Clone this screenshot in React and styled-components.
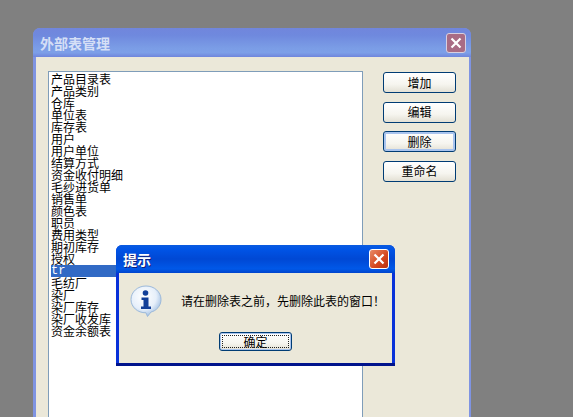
import React from 'react';
import styled, { createGlobalStyle } from 'styled-components';

const GlobalStyle = createGlobalStyle`
  html, body {
    margin: 0;
    padding: 0;
    background: #808080;
  }
`;

const Desktop = styled.div`
  position: relative;
  width: 573px;
  height: 417px;
  overflow: hidden;
  background: #808080;
  padding: 28px 0 0 33px;
  box-sizing: border-box;
  font-family: "Noto Sans CJK SC", "Liberation Sans", sans-serif;
  font-size: 12px;
  color: #000;
`;

const ParentWindow = styled.div`
  width: 438px;
  height: 420px;
  display: flex;
  flex-direction: column;
  background: #7f94e2;
  border-radius: 7px 7px 0 0;
`;

const ParentTitle = styled.div`
  height: 29px;
  flex: none;
  display: flex;
  align-items: center;
  justify-content: space-between;
  padding: 0 5px 0 7px;
  border-radius: 7px 7px 0 0;
  background: linear-gradient(to bottom, #7186dc 0%, #6f89de 25%, #7b9de6 70%, #7d9fe8 85%, #6f85dc 100%);
`;

const ParentTitleText = styled.span`
  font-size: 14px;
  font-weight: 700;
  color: #d5dff6;
`;

const ParentBody = styled.div`
  flex: 1;
  display: flex;
  align-items: flex-start;
  margin: 0 2px 0 3px;
  padding: 14px 13px 0 12px;
  background: #ebe8d9;
  gap: 20px;
`;

const ListBox = styled.div`
  width: 311px;
  height: 360px;
  flex: none;
  background: #fff;
  border: 1px solid #7f9db9;
  padding: 1px 0 0 2px;
`;

const ListItem = styled.div`
  height: 12px;
  line-height: 12px;
  white-space: nowrap;
  background: ${(p) => (p.$selected ? '#316ac5' : 'transparent')};
  color: ${(p) => (p.$selected ? '#fff' : '#000')};
  font-family: ${(p) => (p.$selected ? '"Liberation Mono", monospace' : 'inherit')};
  margin-right: 2px;
`;

const ButtonColumn = styled.div`
  width: 73px;
  flex: none;
  display: flex;
  flex-direction: column;
  gap: 8.6px;
  padding-top: 1px;
`;

const XpButton = styled.div`
  height: 21px;
  box-sizing: border-box;
  display: flex;
  align-items: center;
  justify-content: center;
  border: 1px solid #003c74;
  border-radius: 3px;
  background: linear-gradient(to bottom, #fff 0%, #f6f5ef 60%, #e3e0d4 100%);
  box-shadow: ${(p) => (p.$focused ? 'inset 0 0 0 2px #a9c4ee' : 'none')};
  line-height: 12px;
  font-size: 12px;
`;

const CloseButton = styled.div`
  width: 20px;
  height: 20px;
  box-sizing: border-box;
  flex: none;
  display: flex;
  align-items: center;
  justify-content: center;
  border: 1px solid ${(p) => p.$border};
  border-radius: 3px;
  background: ${(p) => p.$background};
`;

const Dialog = styled.div`
  position: absolute;
  left: 116px;
  top: 245px;
  width: 279px;
  height: 121px;
  display: flex;
  flex-direction: column;
  background: linear-gradient(to right, #0831d9, #0846e8 50%, #0831d9);
  border-radius: 6px 6px 0 0;
  border-bottom: 3px solid #00138c;
  box-sizing: border-box;
`;

const DialogTitle = styled.div`
  height: 28px;
  flex: none;
  display: flex;
  align-items: center;
  justify-content: space-between;
  padding: 0 6px 0 7px;
  border-radius: 6px 6px 0 0;
  background: linear-gradient(to bottom, #0a5be0 0%, #0054e6 15%, #0048d4 50%, #0058e8 85%, #0044cc 100%);
`;

const DialogTitleText = styled.span`
  font-size: 14px;
  font-weight: 700;
  color: #fff;
  text-shadow: 1px 1px 0 #0f1f7c;
`;

const DialogBody = styled.div`
  flex: 1;
  margin: 0 3px;
  background: #ebe8d9;
  display: flex;
  flex-direction: column;
  align-items: center;
`;

const MessageRow = styled.div`
  align-self: stretch;
  display: flex;
  align-items: center;
  gap: 19px;
  padding: 11px 0 0 11px;
  height: 33px;
`;

const MessageText = styled.span`
  white-space: nowrap;
  line-height: 12px;
  font-size: 12px;
`;

const OkButton = styled(XpButton)`
  width: 73px;
  height: 19px;
  margin-top: 15px;
  box-shadow: inset 0 0 0 1px #a9c4ee;
  position: relative;

  &::after {
    content: '';
    position: absolute;
    inset: 2px;
    border: 1px dotted #222;
  }
`;

const tables = [
  '产品目录表', '产品类别', '仓库', '单位表', '库存表', '用户', '用户单位', '结算方式',
  '资金收付明细', '毛纱进货单', '销售单', '颜色表', '职员', '费用类型', '期初库存', '授权',
  'tr', '毛纺厂', '染厂', '染厂库存', '染厂收发库', '资金余额表',
];

const CloseIcon = ({ color }) => (
  <svg width="12" height="12" viewBox="0 0 12 12">
    <path d="M1.5 1.5 L10.5 10.5 M10.5 1.5 L1.5 10.5" stroke={color} strokeWidth="2.2" fill="none" />
  </svg>
);

const InfoIcon = () => (
  <svg width="32" height="32" viewBox="0 0 32 32">
    <defs>
      <radialGradient id="bubble" cx="42%" cy="35%" r="70%">
        <stop offset="0%" stopColor="#ffffff" />
        <stop offset="60%" stopColor="#e6effa" />
        <stop offset="100%" stopColor="#94b6de" />
      </radialGradient>
    </defs>
    <path
      d="M16 1 C24.5 1 31 7 31 14.5 C31 21 26 26 21 27 L17.5 31.5 L16 27.8 C7.5 28 1 22 1 14.5 C1 7 7.5 1 16 1 Z"
      fill="url(#bubble)"
      stroke="#9cb9da"
      strokeWidth="1"
    />
    <circle cx="15.5" cy="8" r="2.8" fill="#123f98" />
    <path d="M11.5 12.5 H18.5 V21.5 H21 V24 H11 V21.5 H13.5 V15 H11.5 Z" fill="#123f98" />
  </svg>
);

export default function App() {
  return (
    <>
      <GlobalStyle />
      <Desktop>
        <ParentWindow>
          <ParentTitle>
            <ParentTitleText>外部表管理</ParentTitleText>
            <CloseButton $border="#d8cfe0" $background="#a96c85">
              <CloseIcon color="#fff" />
            </CloseButton>
          </ParentTitle>
          <ParentBody>
            <ListBox>
              {tables.map((name) => (
                <ListItem key={name} $selected={name === 'tr'}>{name}</ListItem>
              ))}
            </ListBox>
            <ButtonColumn>
              <XpButton>增加</XpButton>
              <XpButton>编辑</XpButton>
              <XpButton $focused>删除</XpButton>
              <XpButton>重命名</XpButton>
            </ButtonColumn>
          </ParentBody>
        </ParentWindow>
        <Dialog>
          <DialogTitle>
            <DialogTitleText>提示</DialogTitleText>
            <CloseButton $border="#fff" $background="linear-gradient(135deg, #e88a66, #d4471f 60%, #b83210)">
              <CloseIcon color="#fff" />
            </CloseButton>
          </DialogTitle>
          <DialogBody>
            <MessageRow>
              <InfoIcon />
              <MessageText>请在删除表之前，先删除此表的窗口！</MessageText>
            </MessageRow>
            <OkButton>确定</OkButton>
          </DialogBody>
        </Dialog>
      </Desktop>
    </>
  );
}
